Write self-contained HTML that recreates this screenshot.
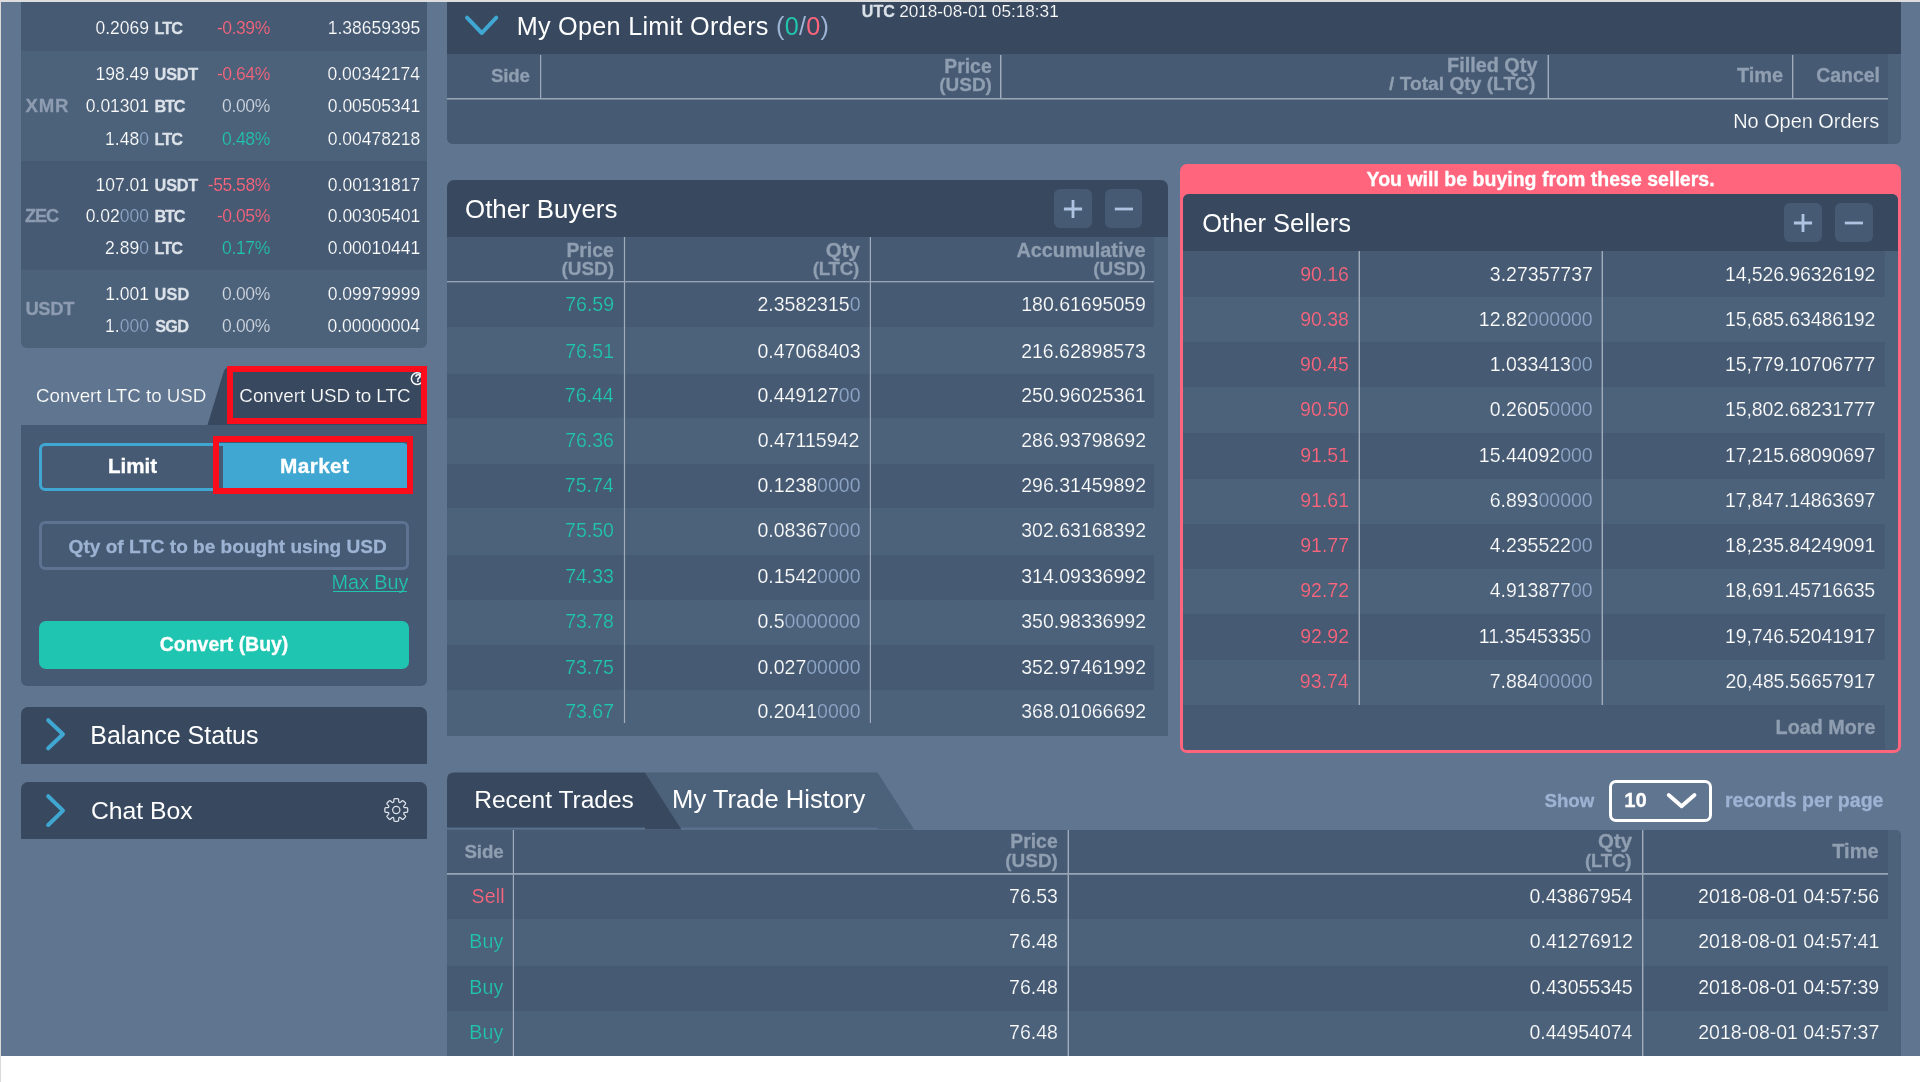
<!DOCTYPE html>
<html><head><meta charset="utf-8"><title>Exchange</title>
<style>
html,body{margin:0;padding:0;background:#fff;}
body{width:1920px;height:1082px;position:relative;overflow:hidden;font-family:"Liberation Sans",sans-serif;}
#r{position:absolute;left:0;top:0;width:1920px;height:1082px;overflow:hidden;will-change:transform;}
#r>div,#r>svg,#r>span{position:absolute;display:block;}
.t{white-space:pre;}
</style></head><body><div id="r">
<div style="left:0.00px;top:0.00px;width:1920.00px;height:2.00px;background:#dedede;"></div>
<div style="left:0.00px;top:0.00px;width:1.00px;height:1082.00px;background:#dcdad8;"></div>
<div style="left:1.00px;top:2.00px;width:1919.00px;height:1054.00px;background:#60758f;"></div>
<div style="left:21.00px;top:2.00px;width:406.00px;height:49.00px;background:#465a73;"></div>
<div style="left:21.00px;top:51.00px;width:406.00px;height:110.00px;background:#4c617a;"></div>
<div style="left:21.00px;top:161.00px;width:406.00px;height:108.50px;background:#465a73;"></div>
<div style="left:21.00px;top:269.50px;width:406.00px;height:78.50px;background:#4c617a;border-radius:0 0 6px 6px;"></div>
<span class="t" style="left:95.50px;top:17.00px;font-size:17.5px;line-height:22px;color:#fff;-webkit-text-stroke:0.18px #465a73;">0.2069</span>
<span class="t" style="left:154.51px;top:18.00px;font-size:16.3px;line-height:20px;color:#dbe1e8;font-weight:bold;-webkit-text-stroke:0.26px #dbe1e8;letter-spacing:-0.974px;">LTC</span>
<span class="t" style="left:216.92px;top:17.00px;font-size:17.5px;line-height:22px;color:#ff657c;-webkit-text-stroke:0.18px #465a73;letter-spacing:-0.429px;">-0.39%</span>
<span class="t" style="left:327.68px;top:17.00px;font-size:17.5px;line-height:22px;color:#fff;-webkit-text-stroke:0.18px #465a73;">1.38659395</span>
<span class="t" style="left:95.50px;top:63.00px;font-size:17.5px;line-height:22px;color:#fff;-webkit-text-stroke:0.18px #4c617a;">198.49</span>
<span class="t" style="left:154.62px;top:64.00px;font-size:16.3px;line-height:20px;color:#dbe1e8;font-weight:bold;-webkit-text-stroke:0.26px #dbe1e8;letter-spacing:-0.239px;">USDT</span>
<span class="t" style="left:216.92px;top:63.00px;font-size:17.5px;line-height:22px;color:#ff657c;-webkit-text-stroke:0.18px #4c617a;letter-spacing:-0.429px;">-0.64%</span>
<span class="t" style="left:327.46px;top:63.00px;font-size:17.5px;line-height:22px;color:#fff;-webkit-text-stroke:0.18px #4c617a;">0.00342174</span>
<span class="t" style="left:85.80px;top:95.00px;font-size:17.5px;line-height:22px;color:#fff;-webkit-text-stroke:0.18px #4c617a;">0.01301</span>
<span class="t" style="left:154.51px;top:96.00px;font-size:16.3px;line-height:20px;color:#dbe1e8;font-weight:bold;-webkit-text-stroke:0.26px #dbe1e8;letter-spacing:-1.282px;">BTC</span>
<span class="t" style="left:222.02px;top:95.00px;font-size:17.5px;line-height:22px;color:#d3dae3;-webkit-text-stroke:0.18px #4c617a;letter-spacing:-0.353px;">0.00%</span>
<span class="t" style="left:327.80px;top:95.00px;font-size:17.5px;line-height:22px;color:#fff;-webkit-text-stroke:0.18px #4c617a;">0.00505341</span>
<span class="t" style="left:105.09px;top:128.00px;font-size:17.5px;line-height:22px;color:#fff;-webkit-text-stroke:0.18px #4c617a;">1.48<span style="color:#8fa6c7">0</span></span>
<span class="t" style="left:154.51px;top:129.00px;font-size:16.3px;line-height:20px;color:#dbe1e8;font-weight:bold;-webkit-text-stroke:0.26px #dbe1e8;letter-spacing:-0.974px;">LTC</span>
<span class="t" style="left:222.02px;top:128.00px;font-size:17.5px;line-height:22px;color:#20c5ad;-webkit-text-stroke:0.18px #4c617a;letter-spacing:-0.353px;">0.48%</span>
<span class="t" style="left:327.70px;top:128.00px;font-size:17.5px;line-height:22px;color:#fff;-webkit-text-stroke:0.18px #4c617a;">0.00478218</span>
<span class="t" style="left:95.53px;top:174.00px;font-size:17.5px;line-height:22px;color:#fff;-webkit-text-stroke:0.18px #465a73;">107.01</span>
<span class="t" style="left:154.62px;top:175.00px;font-size:16.3px;line-height:20px;color:#dbe1e8;font-weight:bold;-webkit-text-stroke:0.26px #dbe1e8;letter-spacing:-0.239px;">USDT</span>
<span class="t" style="left:207.82px;top:174.00px;font-size:17.5px;line-height:22px;color:#ff657c;-webkit-text-stroke:0.18px #465a73;letter-spacing:-0.463px;">-55.58%</span>
<span class="t" style="left:327.82px;top:174.00px;font-size:17.5px;line-height:22px;color:#fff;-webkit-text-stroke:0.18px #465a73;">0.00131817</span>
<span class="t" style="left:85.63px;top:205.00px;font-size:17.5px;line-height:22px;color:#fff;-webkit-text-stroke:0.18px #465a73;">0.02<span style="color:#8fa6c7">000</span></span>
<span class="t" style="left:154.51px;top:206.00px;font-size:16.3px;line-height:20px;color:#dbe1e8;font-weight:bold;-webkit-text-stroke:0.26px #dbe1e8;letter-spacing:-1.282px;">BTC</span>
<span class="t" style="left:216.92px;top:205.00px;font-size:17.5px;line-height:22px;color:#ff657c;-webkit-text-stroke:0.18px #465a73;letter-spacing:-0.429px;">-0.05%</span>
<span class="t" style="left:327.80px;top:205.00px;font-size:17.5px;line-height:22px;color:#fff;-webkit-text-stroke:0.18px #465a73;">0.00305401</span>
<span class="t" style="left:105.09px;top:237.00px;font-size:17.5px;line-height:22px;color:#fff;-webkit-text-stroke:0.18px #465a73;">2.89<span style="color:#8fa6c7">0</span></span>
<span class="t" style="left:154.51px;top:238.00px;font-size:16.3px;line-height:20px;color:#dbe1e8;font-weight:bold;-webkit-text-stroke:0.26px #dbe1e8;letter-spacing:-0.974px;">LTC</span>
<span class="t" style="left:222.02px;top:237.00px;font-size:17.5px;line-height:22px;color:#20c5ad;-webkit-text-stroke:0.18px #465a73;letter-spacing:-0.353px;">0.17%</span>
<span class="t" style="left:327.80px;top:237.00px;font-size:17.5px;line-height:22px;color:#fff;-webkit-text-stroke:0.18px #465a73;">0.00010441</span>
<span class="t" style="left:105.26px;top:283.00px;font-size:17.5px;line-height:22px;color:#fff;-webkit-text-stroke:0.18px #4c617a;">1.001</span>
<span class="t" style="left:154.62px;top:284.00px;font-size:16.3px;line-height:20px;color:#dbe1e8;font-weight:bold;-webkit-text-stroke:0.26px #dbe1e8;letter-spacing:0.124px;">USD</span>
<span class="t" style="left:222.02px;top:283.00px;font-size:17.5px;line-height:22px;color:#d3dae3;-webkit-text-stroke:0.18px #4c617a;letter-spacing:-0.353px;">0.00%</span>
<span class="t" style="left:327.77px;top:283.00px;font-size:17.5px;line-height:22px;color:#fff;-webkit-text-stroke:0.18px #4c617a;">0.09979999</span>
<span class="t" style="left:105.09px;top:315.00px;font-size:17.5px;line-height:22px;color:#fff;-webkit-text-stroke:0.18px #4c617a;">1.<span style="color:#8fa6c7">000</span></span>
<span class="t" style="left:155.13px;top:316.00px;font-size:16.3px;line-height:20px;color:#dbe1e8;font-weight:bold;-webkit-text-stroke:0.26px #dbe1e8;letter-spacing:-0.684px;">SGD</span>
<span class="t" style="left:222.02px;top:315.00px;font-size:17.5px;line-height:22px;color:#d3dae3;-webkit-text-stroke:0.18px #4c617a;letter-spacing:-0.353px;">0.00%</span>
<span class="t" style="left:327.46px;top:315.00px;font-size:17.5px;line-height:22px;color:#fff;-webkit-text-stroke:0.18px #4c617a;">0.00000004</span>
<span class="t" style="left:25.44px;top:94.00px;font-size:18.6px;line-height:23px;color:#8d9cb0;font-weight:bold;-webkit-text-stroke:0.30px #8d9cb0;letter-spacing:0.856px;">XMR</span>
<span class="t" style="left:25.06px;top:205.00px;font-size:18.2px;line-height:23px;color:#8d9cb0;font-weight:bold;-webkit-text-stroke:0.29px #8d9cb0;letter-spacing:-1.180px;">ZEC</span>
<span class="t" style="left:25.39px;top:297.00px;font-size:18.4px;line-height:23px;color:#8d9cb0;font-weight:bold;-webkit-text-stroke:0.29px #8d9cb0;letter-spacing:-0.295px;">USDT</span>
<div style="left:21.00px;top:425.00px;width:406.00px;height:261.30px;background:#465a73;border-radius:0 0 6px 6px;"></div>
<svg style="left:200px;top:360px" width="230" height="66" viewBox="200 360 230 66"><path d="M207.5 425 L223.6 372 Q225.2 367 230.5 367 L427 367 L427 425 Z" fill="#38495f"/></svg>
<span class="t" style="left:35.95px;top:384.00px;font-size:18.74px;line-height:23px;color:#fff;-webkit-text-stroke:0.20px #60758f;">Convert LTC to USD</span>
<span class="t" style="left:239.29px;top:384.00px;font-size:18.83px;line-height:24px;color:#fff;-webkit-text-stroke:0.20px #38495f;">Convert USD to LTC</span>
<svg style="left:408px;top:370px" width="18" height="18" viewBox="408 370 18 18"><circle cx="417.2" cy="378.6" r="5.8" fill="none" stroke="#fff" stroke-width="1.5"/></svg>
<span class="t" style="left:414.80px;top:371.00px;font-size:10.8px;line-height:14px;color:#fff;font-weight:bold;-webkit-text-stroke:0.17px #fff;">?</span>
<div style="left:39.00px;top:443.00px;width:187.00px;height:48.00px;background:#465a73;border:3px solid #3fa7d1;border-radius:6px 0 0 6px;box-sizing:border-box;"></div>
<div style="left:222.75px;top:443.00px;width:186.25px;height:48.00px;background:#3fa7d1;border-radius:0 6px 6px 0;"></div>
<span class="t" style="left:108.02px;top:453.00px;font-size:20.57px;line-height:26px;color:#fff;font-weight:bold;-webkit-text-stroke:0.33px #fff;">Limit</span>
<span class="t" style="left:280.11px;top:453.00px;font-size:20.79px;line-height:26px;color:#fff;font-weight:bold;-webkit-text-stroke:0.33px #fff;letter-spacing:0.375px;">Market</span>
<div style="left:39.00px;top:521.00px;width:370.00px;height:49.00px;background:#465a73;border:3px solid #5d7391;border-radius:6px;box-sizing:border-box;"></div>
<span class="t" style="left:68.62px;top:535.00px;font-size:19.06px;line-height:24px;color:#9db3d3;font-weight:bold;-webkit-text-stroke:0.30px #9db3d3;">Qty of LTC to be bought using USD</span>
<span class="t" style="left:331.47px;top:570.00px;font-size:19.81px;line-height:25px;color:#20c5ad;-webkit-text-stroke:0.21px #465a73;">Max Buy</span>
<div style="left:333.10px;top:590.70px;width:74.40px;height:1.30px;background:#20c5ad;"></div>
<div style="left:39.00px;top:621.25px;width:370.00px;height:47.75px;background:#1fc5b0;border-radius:7px;"></div>
<span class="t" style="left:159.80px;top:632.00px;font-size:19.46px;line-height:24px;color:#fff;font-weight:bold;-webkit-text-stroke:0.31px #fff;">Convert (Buy)</span>
<div style="left:227px;top:366px;width:200px;height:58px;border:6px solid #fb0d1b;box-sizing:border-box"></div>
<div style="left:213px;top:436px;width:200px;height:58px;border:6px solid #fb0d1b;box-sizing:border-box"></div>
<div style="left:21.00px;top:707.00px;width:406.00px;height:56.50px;background:#38495f;border-radius:7px 7px 0 0;"></div>
<div style="left:21.00px;top:782.00px;width:406.00px;height:56.50px;background:#38495f;border-radius:7px 7px 0 0;"></div>
<svg style="left:40px;top:712px" width="32" height="120" viewBox="40 712 32 120"><g fill="none" stroke="#3fa7d1" stroke-width="4" stroke-linecap="round" stroke-linejoin="round"><path d="M48.2 720.2 L63 734.2 L48.2 748.3"/><path d="M48.2 796.2 L63 810.6 L48.2 825"/></g></svg>
<span class="t" style="left:90.20px;top:720.00px;font-size:25.04px;line-height:31px;color:#fff;">Balance Status</span>
<span class="t" style="left:90.99px;top:795.00px;font-size:24.74px;line-height:31px;color:#fff;">Chat Box</span>
<svg style="left:380px;top:794px" width="32" height="32" viewBox="380 794 32 32"><g fill="none" stroke="#dde2e9" stroke-width="1.25" stroke-linejoin="round"><path d="M393.87 801.08 L393.87 799.63 Q393.87 798.53 394.97 798.53 L397.57 798.53 Q398.67 798.53 398.67 799.63 L398.67 801.08 Q398.95 803.51 400.87 801.99 L401.89 800.96 Q402.67 800.19 403.45 800.96 L405.29 802.80 Q406.06 803.58 405.29 804.36 L404.26 805.38 Q402.74 807.30 405.17 807.58 L406.62 807.58 Q407.72 807.58 407.72 808.68 L407.72 811.28 Q407.72 812.38 406.62 812.38 L405.17 812.38 Q402.74 812.66 404.26 814.58 L405.29 815.60 Q406.06 816.38 405.29 817.16 L403.45 819.00 Q402.67 819.77 401.89 819.00 L400.87 817.97 Q398.95 816.45 398.67 818.88 L398.67 820.33 Q398.67 821.43 397.57 821.43 L394.97 821.43 Q393.87 821.43 393.87 820.33 L393.87 818.88 Q393.59 816.45 391.67 817.97 L390.65 819.00 Q389.87 819.77 389.09 819.00 L387.25 817.16 Q386.48 816.38 387.25 815.60 L388.28 814.58 Q389.80 812.66 387.37 812.38 L385.92 812.38 Q384.82 812.38 384.82 811.28 L384.82 808.68 Q384.82 807.58 385.92 807.58 L387.37 807.58 Q389.80 807.30 388.28 805.38 L387.25 804.36 Q386.48 803.58 387.25 802.80 L389.09 800.96 Q389.87 800.19 390.65 800.96 L391.67 801.99 Q393.59 803.51 393.87 801.08 Z"/><circle cx="396.27" cy="809.98" r="3.6"/></g></svg>
<div style="left:447.00px;top:2.00px;width:1454.00px;height:52.40px;background:#38495f;"></div>
<div style="left:447.00px;top:54.40px;width:1454.00px;height:89.60px;background:#4c617a;border-radius:0 0 6px 6px;"></div>
<div style="left:447.00px;top:54.40px;width:1441.00px;height:89.60px;background:#465a73;border-radius:0 0 0 6px;"></div>
<svg style="left:458px;top:8px" width="48" height="34" viewBox="458 8 48 34"><path d="M467 17.6 L481.8 33 L496.3 17.6" fill="none" stroke="#3fa7d1" stroke-width="4" stroke-linecap="round" stroke-linejoin="round"/></svg>
<span class="t" style="left:516.68px;top:10.00px;font-size:25.2px;line-height:32px;color:#fff;letter-spacing:0.284px;">My Open Limit Orders <span style="color:#9db3d3">(</span><span style="color:#20c5ad">0</span><span style="color:#9db3d3">/</span><span style="color:#ff657c">0</span><span style="color:#9db3d3">)</span></span>
<span class="t" style="left:861.78px;top:1.00px;font-size:16.08px;line-height:20px;color:#dbe1e8;font-weight:bold;-webkit-text-stroke:0.26px #dbe1e8;letter-spacing:0.004px;">UTC</span>
<span class="t" style="left:899.13px;top:0.00px;font-size:17.21px;line-height:22px;color:#fff;-webkit-text-stroke:0.18px #38495f;">2018-08-01 05:18:31</span>
<span class="t" style="left:490.96px;top:64.00px;font-size:18.72px;line-height:23px;color:#8f9eb0;font-weight:bold;-webkit-text-stroke:0.30px #8f9eb0;letter-spacing:-0.151px;">Side</span>
<span class="t" style="left:944.30px;top:54.00px;font-size:19.36px;line-height:24px;color:#8f9eb0;font-weight:bold;-webkit-text-stroke:0.31px #8f9eb0;">Price</span>
<span class="t" style="left:939.31px;top:73.00px;font-size:18.95px;line-height:24px;color:#8f9eb0;font-weight:bold;-webkit-text-stroke:0.30px #8f9eb0;">(USD)</span>
<span class="t" style="left:1447.07px;top:53.00px;font-size:19.83px;line-height:25px;color:#8f9eb0;font-weight:bold;-webkit-text-stroke:0.32px #8f9eb0;">Filled Qty</span>
<span class="t" style="left:1389.01px;top:72.00px;font-size:19.19px;line-height:24px;color:#8f9eb0;font-weight:bold;-webkit-text-stroke:0.31px #8f9eb0;">/ Total Qty (LTC)</span>
<span class="t" style="left:1736.88px;top:63.00px;font-size:20.01px;line-height:25px;color:#8f9eb0;font-weight:bold;-webkit-text-stroke:0.32px #8f9eb0;">Time</span>
<span class="t" style="left:1816.20px;top:63.00px;font-size:19.45px;line-height:24px;color:#8f9eb0;font-weight:bold;-webkit-text-stroke:0.31px #8f9eb0;">Cancel</span>
<div style="left:540.00px;top:55.00px;width:1.00px;height:43.00px;background:rgba(160,172,187,1.00);"></div>
<div style="left:541.00px;top:55.00px;width:1.00px;height:43.00px;background:rgba(160,172,187,0.20);"></div>
<div style="left:1000.00px;top:55.00px;width:1.00px;height:43.00px;background:rgba(160,172,187,1.00);"></div>
<div style="left:1001.00px;top:55.00px;width:1.00px;height:43.00px;background:rgba(160,172,187,0.45);"></div>
<div style="left:1547.00px;top:55.00px;width:1.00px;height:43.00px;background:rgba(160,172,187,0.45);"></div>
<div style="left:1548.00px;top:55.00px;width:1.00px;height:43.00px;background:rgba(160,172,187,1.00);"></div>
<div style="left:1792.00px;top:55.00px;width:1.00px;height:43.00px;background:rgba(160,172,187,1.00);"></div>
<div style="left:1793.00px;top:55.00px;width:1.00px;height:43.00px;background:rgba(160,172,187,0.35);"></div>
<div style="left:447.00px;top:98.00px;width:1441.00px;height:1.00px;background:rgb(152,165,181);"></div>
<div style="left:447.00px;top:99.00px;width:1441.00px;height:1.00px;background:rgba(152,165,181,0.55);"></div>
<span class="t" style="left:1733.17px;top:109.00px;font-size:19.92px;line-height:25px;color:#fff;-webkit-text-stroke:0.21px #465a73;">No Open Orders</span>
<div style="left:447.00px;top:180.00px;width:721.00px;height:57.00px;background:#38495f;border-radius:7px 7px 0 0;"></div>
<div style="left:447.00px;top:237.00px;width:721.00px;height:499.25px;background:#4c617a;"></div>
<div style="left:447.00px;top:237.00px;width:707.40px;height:46.00px;background:#465a73;"></div>
<div style="left:1054.00px;top:189.40px;width:37.50px;height:39.00px;background:#465a73;border-radius:6px;"></div>
<div style="left:1105.00px;top:189.40px;width:37.25px;height:39.00px;background:#465a73;border-radius:6px;"></div>
<svg style="left:1061.1px;top:196.75px" width="80" height="24" viewBox="1061.1 196.75 80 24"><g stroke="#aec3e2" stroke-width="2.8" fill="none"><path d="M1064.0 208.75 H1082.1999999999998 M1073.1 199.65 V217.85"/><path d="M1114.9 208.75 H1133.1"/></g></svg>
<span class="t" style="left:465.02px;top:193.00px;font-size:25.87px;line-height:32px;color:#fff;">Other Buyers</span>
<span class="t" style="left:566.40px;top:238.00px;font-size:19.36px;line-height:24px;color:#8f9eb0;font-weight:bold;-webkit-text-stroke:0.31px #8f9eb0;">Price</span>
<span class="t" style="left:561.41px;top:257.00px;font-size:18.95px;line-height:24px;color:#8f9eb0;font-weight:bold;-webkit-text-stroke:0.30px #8f9eb0;">(USD)</span>
<span class="t" style="left:825.86px;top:238.00px;font-size:20.36px;line-height:25px;color:#8f9eb0;font-weight:bold;-webkit-text-stroke:0.33px #8f9eb0;">Qty</span>
<span class="t" style="left:812.87px;top:257.00px;font-size:18.72px;line-height:23px;color:#8f9eb0;font-weight:bold;-webkit-text-stroke:0.30px #8f9eb0;letter-spacing:-0.273px;">(LTC)</span>
<span class="t" style="left:1016.40px;top:238.00px;font-size:19.88px;line-height:25px;color:#8f9eb0;font-weight:bold;-webkit-text-stroke:0.32px #8f9eb0;">Accumulative</span>
<span class="t" style="left:1093.31px;top:257.00px;font-size:18.95px;line-height:24px;color:#8f9eb0;font-weight:bold;-webkit-text-stroke:0.30px #8f9eb0;">(USD)</span>
<div style="left:447.00px;top:283.00px;width:707.40px;height:44.40px;background:#465a73;"></div>
<span class="t" style="left:565.23px;top:292.00px;font-size:19.5px;line-height:24px;color:#20c5ad;-webkit-text-stroke:0.20px #465a73;">76.59</span>
<span class="t" style="left:757.44px;top:292.00px;font-size:19.5px;line-height:24px;color:#fff;-webkit-text-stroke:0.20px #465a73;">2.3582315<span style="color:#8fa6c7">0</span></span>
<span class="t" style="left:1021.21px;top:292.00px;font-size:19.5px;line-height:24px;color:#fff;-webkit-text-stroke:0.20px #465a73;">180.61695059</span>
<span class="t" style="left:565.25px;top:339.00px;font-size:19.5px;line-height:24px;color:#20c5ad;-webkit-text-stroke:0.20px #4c617a;">76.51</span>
<span class="t" style="left:757.53px;top:339.00px;font-size:19.5px;line-height:24px;color:#fff;-webkit-text-stroke:0.20px #4c617a;">0.47068403</span>
<span class="t" style="left:1021.14px;top:339.00px;font-size:19.5px;line-height:24px;color:#fff;-webkit-text-stroke:0.20px #4c617a;">216.62898573</span>
<div style="left:447.00px;top:373.80px;width:707.40px;height:44.70px;background:#465a73;"></div>
<span class="t" style="left:564.87px;top:383.00px;font-size:19.5px;line-height:24px;color:#20c5ad;-webkit-text-stroke:0.20px #465a73;">76.44</span>
<span class="t" style="left:757.44px;top:383.00px;font-size:19.5px;line-height:24px;color:#fff;-webkit-text-stroke:0.20px #465a73;">0.449127<span style="color:#8fa6c7">00</span></span>
<span class="t" style="left:1021.24px;top:383.00px;font-size:19.5px;line-height:24px;color:#fff;-webkit-text-stroke:0.20px #465a73;">250.96025361</span>
<span class="t" style="left:565.16px;top:428.00px;font-size:19.5px;line-height:24px;color:#20c5ad;-webkit-text-stroke:0.20px #4c617a;">76.36</span>
<span class="t" style="left:757.66px;top:428.00px;font-size:19.5px;line-height:24px;color:#fff;-webkit-text-stroke:0.20px #4c617a;">0.47115942</span>
<span class="t" style="left:1021.27px;top:428.00px;font-size:19.5px;line-height:24px;color:#fff;-webkit-text-stroke:0.20px #4c617a;">286.93798692</span>
<div style="left:447.00px;top:463.60px;width:707.40px;height:44.70px;background:#465a73;"></div>
<span class="t" style="left:564.87px;top:473.00px;font-size:19.5px;line-height:24px;color:#20c5ad;-webkit-text-stroke:0.20px #465a73;">75.74</span>
<span class="t" style="left:757.44px;top:473.00px;font-size:19.5px;line-height:24px;color:#fff;-webkit-text-stroke:0.20px #465a73;">0.1238<span style="color:#8fa6c7">0000</span></span>
<span class="t" style="left:1021.27px;top:473.00px;font-size:19.5px;line-height:24px;color:#fff;-webkit-text-stroke:0.20px #465a73;">296.31459892</span>
<span class="t" style="left:565.06px;top:518.00px;font-size:19.5px;line-height:24px;color:#20c5ad;-webkit-text-stroke:0.20px #4c617a;">75.50</span>
<span class="t" style="left:757.44px;top:518.00px;font-size:19.5px;line-height:24px;color:#fff;-webkit-text-stroke:0.20px #4c617a;">0.08367<span style="color:#8fa6c7">000</span></span>
<span class="t" style="left:1021.27px;top:518.00px;font-size:19.5px;line-height:24px;color:#fff;-webkit-text-stroke:0.20px #4c617a;">302.63168392</span>
<div style="left:447.00px;top:554.90px;width:707.40px;height:44.90px;background:#465a73;"></div>
<span class="t" style="left:565.16px;top:564.00px;font-size:19.5px;line-height:24px;color:#20c5ad;-webkit-text-stroke:0.20px #465a73;">74.33</span>
<span class="t" style="left:757.44px;top:564.00px;font-size:19.5px;line-height:24px;color:#fff;-webkit-text-stroke:0.20px #465a73;">0.1542<span style="color:#8fa6c7">0000</span></span>
<span class="t" style="left:1021.27px;top:564.00px;font-size:19.5px;line-height:24px;color:#fff;-webkit-text-stroke:0.20px #465a73;">314.09336992</span>
<span class="t" style="left:565.15px;top:609.00px;font-size:19.5px;line-height:24px;color:#20c5ad;-webkit-text-stroke:0.20px #4c617a;">73.78</span>
<span class="t" style="left:757.44px;top:609.00px;font-size:19.5px;line-height:24px;color:#fff;-webkit-text-stroke:0.20px #4c617a;">0.5<span style="color:#8fa6c7">0000000</span></span>
<span class="t" style="left:1021.27px;top:609.00px;font-size:19.5px;line-height:24px;color:#fff;-webkit-text-stroke:0.20px #4c617a;">350.98336992</span>
<div style="left:447.00px;top:645.00px;width:707.40px;height:45.10px;background:#465a73;"></div>
<span class="t" style="left:565.12px;top:655.00px;font-size:19.5px;line-height:24px;color:#20c5ad;-webkit-text-stroke:0.20px #465a73;">73.75</span>
<span class="t" style="left:757.44px;top:655.00px;font-size:19.5px;line-height:24px;color:#fff;-webkit-text-stroke:0.20px #465a73;">0.027<span style="color:#8fa6c7">00000</span></span>
<span class="t" style="left:1021.27px;top:655.00px;font-size:19.5px;line-height:24px;color:#fff;-webkit-text-stroke:0.20px #465a73;">352.97461992</span>
<span class="t" style="left:565.28px;top:699.00px;font-size:19.5px;line-height:24px;color:#20c5ad;-webkit-text-stroke:0.20px #4c617a;">73.67</span>
<span class="t" style="left:757.44px;top:699.00px;font-size:19.5px;line-height:24px;color:#fff;-webkit-text-stroke:0.20px #4c617a;">0.2041<span style="color:#8fa6c7">0000</span></span>
<span class="t" style="left:1021.27px;top:699.00px;font-size:19.5px;line-height:24px;color:#fff;-webkit-text-stroke:0.20px #4c617a;">368.01066692</span>
<div style="left:623.00px;top:237.00px;width:1.00px;height:486.00px;background:rgba(160,172,187,0.10);"></div>
<div style="left:624.00px;top:237.00px;width:1.00px;height:486.00px;background:rgba(160,172,187,1.00);"></div>
<div style="left:625.00px;top:237.00px;width:1.00px;height:486.00px;background:rgba(160,172,187,0.10);"></div>
<div style="left:869.00px;top:237.00px;width:1.00px;height:486.00px;background:rgba(160,172,187,0.20);"></div>
<div style="left:870.00px;top:237.00px;width:1.00px;height:486.00px;background:rgba(160,172,187,1.00);"></div>
<div style="left:447.00px;top:281.00px;width:707.40px;height:1.00px;background:rgb(152,165,181);"></div>
<div style="left:447.00px;top:282.00px;width:707.40px;height:1.00px;background:rgba(152,165,181,0.35);"></div>
<div style="left:1180.00px;top:164.00px;width:721.00px;height:589.00px;background:#ff657c;border-radius:7px;"></div>
<span class="t" style="left:1366.57px;top:167.00px;font-size:19.55px;line-height:24px;color:#fff;font-weight:bold;-webkit-text-stroke:0.31px #fff;">You will be buying from these sellers.</span>
<div style="left:1183.00px;top:194.00px;width:715.00px;height:556.00px;background:#4c617a;border-radius:6px 6px 4px 4px;"></div>
<div style="left:1183.00px;top:194.00px;width:715.00px;height:56.60px;background:#38495f;border-radius:6px 6px 0 0;"></div>
<div style="left:1784.40px;top:203.10px;width:37.50px;height:38.80px;background:#465a73;border-radius:6px;"></div>
<div style="left:1835.25px;top:203.10px;width:37.50px;height:38.80px;background:#465a73;border-radius:6px;"></div>
<svg style="left:1791.3px;top:210.5px" width="80" height="24" viewBox="1791.3 210.5 80 24"><g stroke="#aec3e2" stroke-width="2.8" fill="none"><path d="M1794.2 222.5 H1812.3999999999999 M1803.3 213.4 V231.6"/><path d="M1845.1000000000001 222.5 H1863.3"/></g></svg>
<span class="t" style="left:1202.29px;top:207.00px;font-size:25.47px;line-height:32px;color:#fff;">Other Sellers</span>
<div style="left:1183.00px;top:250.60px;width:702.00px;height:46.80px;background:#465a73;"></div>
<span class="t" style="left:1300.16px;top:262.00px;font-size:19.5px;line-height:24px;color:#ff657c;-webkit-text-stroke:0.20px #465a73;">90.16</span>
<span class="t" style="left:1489.86px;top:262.00px;font-size:19.5px;line-height:24px;color:#fff;-webkit-text-stroke:0.20px #465a73;">3.27357737</span>
<span class="t" style="left:1725.01px;top:262.00px;font-size:19.5px;line-height:24px;color:#fff;-webkit-text-stroke:0.20px #465a73;letter-spacing:-0.104px;">14,526.96326192</span>
<span class="t" style="left:1300.15px;top:307.00px;font-size:19.5px;line-height:24px;color:#ff657c;-webkit-text-stroke:0.20px #4c617a;">90.38</span>
<span class="t" style="left:1478.79px;top:307.00px;font-size:19.5px;line-height:24px;color:#fff;-webkit-text-stroke:0.20px #4c617a;">12.82<span style="color:#8fa6c7">000000</span></span>
<span class="t" style="left:1725.01px;top:307.00px;font-size:19.5px;line-height:24px;color:#fff;-webkit-text-stroke:0.20px #4c617a;letter-spacing:-0.104px;">15,685.63486192</span>
<div style="left:1183.00px;top:342.10px;width:702.00px;height:45.10px;background:#465a73;"></div>
<span class="t" style="left:1300.12px;top:352.00px;font-size:19.5px;line-height:24px;color:#ff657c;-webkit-text-stroke:0.20px #465a73;">90.45</span>
<span class="t" style="left:1489.64px;top:352.00px;font-size:19.5px;line-height:24px;color:#fff;-webkit-text-stroke:0.20px #465a73;">1.033413<span style="color:#8fa6c7">00</span></span>
<span class="t" style="left:1725.01px;top:352.00px;font-size:19.5px;line-height:24px;color:#fff;-webkit-text-stroke:0.20px #465a73;letter-spacing:-0.104px;">15,779.10706777</span>
<span class="t" style="left:1300.06px;top:397.00px;font-size:19.5px;line-height:24px;color:#ff657c;-webkit-text-stroke:0.20px #4c617a;">90.50</span>
<span class="t" style="left:1489.64px;top:397.00px;font-size:19.5px;line-height:24px;color:#fff;-webkit-text-stroke:0.20px #4c617a;">0.2605<span style="color:#8fa6c7">0000</span></span>
<span class="t" style="left:1725.01px;top:397.00px;font-size:19.5px;line-height:24px;color:#fff;-webkit-text-stroke:0.20px #4c617a;letter-spacing:-0.104px;">15,802.68231777</span>
<div style="left:1183.00px;top:433.40px;width:702.00px;height:45.30px;background:#465a73;"></div>
<span class="t" style="left:1300.25px;top:443.00px;font-size:19.5px;line-height:24px;color:#ff657c;-webkit-text-stroke:0.20px #465a73;">91.51</span>
<span class="t" style="left:1478.79px;top:443.00px;font-size:19.5px;line-height:24px;color:#fff;-webkit-text-stroke:0.20px #465a73;">15.44092<span style="color:#8fa6c7">000</span></span>
<span class="t" style="left:1725.01px;top:443.00px;font-size:19.5px;line-height:24px;color:#fff;-webkit-text-stroke:0.20px #465a73;letter-spacing:-0.104px;">17,215.68090697</span>
<span class="t" style="left:1300.25px;top:488.00px;font-size:19.5px;line-height:24px;color:#ff657c;-webkit-text-stroke:0.20px #4c617a;">91.61</span>
<span class="t" style="left:1489.64px;top:488.00px;font-size:19.5px;line-height:24px;color:#fff;-webkit-text-stroke:0.20px #4c617a;">6.893<span style="color:#8fa6c7">00000</span></span>
<span class="t" style="left:1725.01px;top:488.00px;font-size:19.5px;line-height:24px;color:#fff;-webkit-text-stroke:0.20px #4c617a;letter-spacing:-0.104px;">17,847.14863697</span>
<div style="left:1183.00px;top:523.90px;width:702.00px;height:45.10px;background:#465a73;"></div>
<span class="t" style="left:1300.28px;top:533.00px;font-size:19.5px;line-height:24px;color:#ff657c;-webkit-text-stroke:0.20px #465a73;">91.77</span>
<span class="t" style="left:1489.64px;top:533.00px;font-size:19.5px;line-height:24px;color:#fff;-webkit-text-stroke:0.20px #465a73;">4.235522<span style="color:#8fa6c7">00</span></span>
<span class="t" style="left:1725.01px;top:533.00px;font-size:19.5px;line-height:24px;color:#fff;-webkit-text-stroke:0.20px #465a73;letter-spacing:-0.106px;">18,235.84249091</span>
<span class="t" style="left:1300.28px;top:578.00px;font-size:19.5px;line-height:24px;color:#ff657c;-webkit-text-stroke:0.20px #4c617a;">92.72</span>
<span class="t" style="left:1489.64px;top:578.00px;font-size:19.5px;line-height:24px;color:#fff;-webkit-text-stroke:0.20px #4c617a;">4.913877<span style="color:#8fa6c7">00</span></span>
<span class="t" style="left:1725.01px;top:578.00px;font-size:19.5px;line-height:24px;color:#fff;-webkit-text-stroke:0.20px #4c617a;letter-spacing:-0.115px;">18,691.45716635</span>
<div style="left:1183.00px;top:613.90px;width:702.00px;height:45.80px;background:#465a73;"></div>
<span class="t" style="left:1300.28px;top:624.00px;font-size:19.5px;line-height:24px;color:#ff657c;-webkit-text-stroke:0.20px #465a73;">92.92</span>
<span class="t" style="left:1478.79px;top:624.00px;font-size:19.5px;line-height:24px;color:#fff;-webkit-text-stroke:0.20px #465a73;">11.3545335<span style="color:#8fa6c7">0</span></span>
<span class="t" style="left:1725.01px;top:624.00px;font-size:19.5px;line-height:24px;color:#fff;-webkit-text-stroke:0.20px #465a73;letter-spacing:-0.104px;">19,746.52041917</span>
<span class="t" style="left:1299.87px;top:669.00px;font-size:19.5px;line-height:24px;color:#ff657c;-webkit-text-stroke:0.20px #4c617a;">93.74</span>
<span class="t" style="left:1489.64px;top:669.00px;font-size:19.5px;line-height:24px;color:#fff;-webkit-text-stroke:0.20px #4c617a;">7.884<span style="color:#8fa6c7">00000</span></span>
<span class="t" style="left:1725.52px;top:669.00px;font-size:19.5px;line-height:24px;color:#fff;-webkit-text-stroke:0.20px #4c617a;letter-spacing:-0.140px;">20,485.56657917</span>
<div style="left:1183.00px;top:705.00px;width:702.00px;height:45.00px;background:#465a73;border-radius:0 0 0 4px;"></div>
<div style="left:1358.00px;top:250.60px;width:1.00px;height:454.40px;background:rgba(160,172,187,0.40);"></div>
<div style="left:1359.00px;top:250.60px;width:1.00px;height:454.40px;background:rgba(160,172,187,1.00);"></div>
<div style="left:1601.00px;top:250.60px;width:1.00px;height:454.40px;background:rgba(160,172,187,0.40);"></div>
<div style="left:1602.00px;top:250.60px;width:1.00px;height:454.40px;background:rgba(160,172,187,1.00);"></div>
<span class="t" style="left:1775.58px;top:715.00px;font-size:19.75px;line-height:25px;color:#8f9eb0;font-weight:bold;-webkit-text-stroke:0.32px #8f9eb0;">Load More</span>
<svg style="left:447px;top:772px" width="470" height="58" viewBox="447 772 470 58"><path d="M645 772.5 L877.5 772.5 L914 829.5 L681.3 829.5 Z" fill="#4c617a"/><path d="M447 829.5 L447 779.5 Q447 772.5 454 772.5 L645 772.5 L681.5 829.5 Z" fill="#38495f"/><rect x="447" y="827.6" width="198" height="1.9" fill="#5a7290"/><rect x="681" y="827.6" width="196.5" height="1.9" fill="#5a7290"/></svg>
<span class="t" style="left:474.24px;top:784.00px;font-size:24.56px;line-height:31px;color:#fff;">Recent Trades</span>
<span class="t" style="left:672.10px;top:783.00px;font-size:25.57px;line-height:32px;color:#fff;">My Trade History</span>
<span class="t" style="left:1544.46px;top:789.00px;font-size:18.72px;line-height:23px;color:#9db3d3;font-weight:bold;-webkit-text-stroke:0.30px #9db3d3;letter-spacing:-0.005px;">Show</span>
<div style="left:1609px;top:780px;width:103px;height:42px;border:3px solid #fff;border-radius:7px;box-sizing:border-box"></div>
<span class="t" style="left:1624.33px;top:788.00px;font-size:20.23px;line-height:25px;color:#fff;font-weight:bold;-webkit-text-stroke:0.32px #fff;">10</span>
<svg style="left:1660px;top:788px" width="44" height="26" viewBox="1660 788 44 26"><path d="M1668.7 795 L1681.6 806.3 L1694.5 795" fill="none" stroke="#fff" stroke-width="3.8" stroke-linejoin="round" stroke-linecap="round"/></svg>
<span class="t" style="left:1724.96px;top:788.00px;font-size:19.55px;line-height:24px;color:#9db3d3;font-weight:bold;-webkit-text-stroke:0.31px #9db3d3;">records per page</span>
<div style="left:447.00px;top:829.50px;width:1454.00px;height:226.50px;background:#4c617a;border-radius:0 5px 0 0;"></div>
<div style="left:447.00px;top:829.50px;width:1441.00px;height:45.50px;background:#465a73;"></div>
<span class="t" style="left:464.46px;top:840.00px;font-size:18.72px;line-height:23px;color:#8f9eb0;font-weight:bold;-webkit-text-stroke:0.30px #8f9eb0;letter-spacing:-0.085px;">Side</span>
<span class="t" style="left:1010.30px;top:829.00px;font-size:19.36px;line-height:24px;color:#8f9eb0;font-weight:bold;-webkit-text-stroke:0.31px #8f9eb0;">Price</span>
<span class="t" style="left:1005.31px;top:849.00px;font-size:18.95px;line-height:24px;color:#8f9eb0;font-weight:bold;-webkit-text-stroke:0.30px #8f9eb0;">(USD)</span>
<span class="t" style="left:1598.06px;top:829.00px;font-size:20.36px;line-height:25px;color:#8f9eb0;font-weight:bold;-webkit-text-stroke:0.33px #8f9eb0;">Qty</span>
<span class="t" style="left:1585.07px;top:849.00px;font-size:18.72px;line-height:23px;color:#8f9eb0;font-weight:bold;-webkit-text-stroke:0.30px #8f9eb0;letter-spacing:-0.273px;">(LTC)</span>
<span class="t" style="left:1832.28px;top:839.00px;font-size:20.01px;line-height:25px;color:#8f9eb0;font-weight:bold;-webkit-text-stroke:0.32px #8f9eb0;">Time</span>
<div style="left:447.00px;top:875.00px;width:1441.00px;height:44.00px;background:#465a73;"></div>
<span class="t" style="left:471.49px;top:884.00px;font-size:19.5px;line-height:24px;color:#ff657c;-webkit-text-stroke:0.20px #465a73;letter-spacing:0.200px;">Sell</span>
<span class="t" style="left:1009.06px;top:884.00px;font-size:19.5px;line-height:24px;color:#fff;-webkit-text-stroke:0.20px #465a73;">76.53</span>
<span class="t" style="left:1529.45px;top:884.00px;font-size:19.5px;line-height:24px;color:#fff;-webkit-text-stroke:0.20px #465a73;">0.43867954</span>
<span class="t" style="left:1698.09px;top:884.00px;font-size:19.5px;line-height:24px;color:#fff;-webkit-text-stroke:0.20px #465a73;">2018-08-01 04:57:56</span>
<span class="t" style="left:469.34px;top:929.00px;font-size:19.5px;line-height:24px;color:#20c5ad;-webkit-text-stroke:0.20px #4c617a;letter-spacing:0.200px;">Buy</span>
<span class="t" style="left:1009.05px;top:929.00px;font-size:19.5px;line-height:24px;color:#fff;-webkit-text-stroke:0.20px #4c617a;">76.48</span>
<span class="t" style="left:1529.86px;top:929.00px;font-size:19.5px;line-height:24px;color:#fff;-webkit-text-stroke:0.20px #4c617a;">0.41276912</span>
<span class="t" style="left:1698.18px;top:929.00px;font-size:19.5px;line-height:24px;color:#fff;-webkit-text-stroke:0.20px #4c617a;">2018-08-01 04:57:41</span>
<div style="left:447.00px;top:965.60px;width:1441.00px;height:45.40px;background:#465a73;"></div>
<span class="t" style="left:469.34px;top:975.00px;font-size:19.5px;line-height:24px;color:#20c5ad;-webkit-text-stroke:0.20px #465a73;letter-spacing:0.200px;">Buy</span>
<span class="t" style="left:1009.05px;top:975.00px;font-size:19.5px;line-height:24px;color:#fff;-webkit-text-stroke:0.20px #465a73;">76.48</span>
<span class="t" style="left:1529.70px;top:975.00px;font-size:19.5px;line-height:24px;color:#fff;-webkit-text-stroke:0.20px #465a73;">0.43055345</span>
<span class="t" style="left:1698.15px;top:975.00px;font-size:19.5px;line-height:24px;color:#fff;-webkit-text-stroke:0.20px #465a73;">2018-08-01 04:57:39</span>
<span class="t" style="left:469.34px;top:1020.00px;font-size:19.5px;line-height:24px;color:#20c5ad;-webkit-text-stroke:0.20px #4c617a;letter-spacing:0.200px;">Buy</span>
<span class="t" style="left:1009.05px;top:1020.00px;font-size:19.5px;line-height:24px;color:#fff;-webkit-text-stroke:0.20px #4c617a;">76.48</span>
<span class="t" style="left:1529.45px;top:1020.00px;font-size:19.5px;line-height:24px;color:#fff;-webkit-text-stroke:0.20px #4c617a;">0.44954074</span>
<span class="t" style="left:1698.21px;top:1020.00px;font-size:19.5px;line-height:24px;color:#fff;-webkit-text-stroke:0.20px #4c617a;">2018-08-01 04:57:37</span>
<div style="left:512.00px;top:830.00px;width:1.00px;height:226.00px;background:rgba(160,172,187,0.20);"></div>
<div style="left:513.00px;top:830.00px;width:1.00px;height:226.00px;background:rgba(160,172,187,1.00);"></div>
<div style="left:1067.00px;top:830.00px;width:1.00px;height:226.00px;background:rgba(160,172,187,0.40);"></div>
<div style="left:1068.00px;top:830.00px;width:1.00px;height:226.00px;background:rgba(160,172,187,1.00);"></div>
<div style="left:1642.00px;top:830.00px;width:1.00px;height:226.00px;background:rgba(160,172,187,1.00);"></div>
<div style="left:1643.00px;top:830.00px;width:1.00px;height:226.00px;background:rgba(160,172,187,0.40);"></div>
<div style="left:447.00px;top:873.00px;width:1441.00px;height:1.00px;background:rgb(152,165,181);"></div>
<div style="left:447.00px;top:874.00px;width:1441.00px;height:1.00px;background:rgba(152,165,181,0.75);"></div>
<div style="left:1.00px;top:1056.00px;width:1919.00px;height:26.00px;background:#fff;"></div>
</div></body></html>
